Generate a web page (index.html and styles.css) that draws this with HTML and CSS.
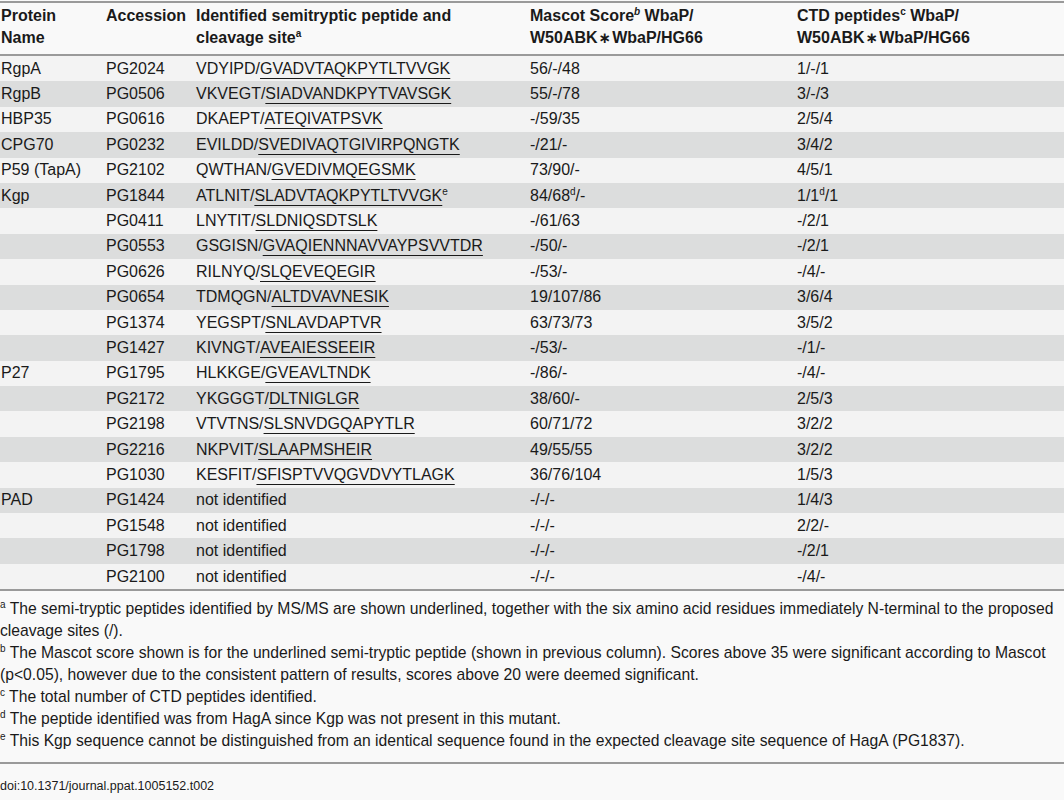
FILE: index.html
```html
<!DOCTYPE html>
<html lang="en">
<head>
  <meta charset="UTF-8">
  <title>Table 2</title>
  <link rel="stylesheet" href="styles.css">
</head>
<body>
  <div class="table-wrap">
    <table class="data-table">
      <colgroup>
        <col class="col-name">
        <col class="col-acc">
        <col class="col-pep">
        <col class="col-score">
        <col class="col-ctd">
      </colgroup>
      <thead>
        <tr>
          <th>Protein Name</th>
          <th>Accession</th>
          <th>Identified semitryptic peptide and cleavage site<sup>a</sup></th>
          <th>Mascot Score<sup><i>b</i></sup> WbaP/ W50ABK<span class="star">∗</span>WbaP/HG66</th>
          <th>CTD peptides<sup>c</sup> WbaP/ W50ABK<span class="star">∗</span>WbaP/HG66</th>
        </tr>
      </thead>
      <tbody>
        <tr><td>RgpA</td><td>PG2024</td><td>VDYIPD/<u>GVADVTAQKPYTLTVVGK</u></td><td>56/-/48</td><td>1/-/1</td></tr>
        <tr><td>RgpB</td><td>PG0506</td><td>VKVEGT/<u>SIADVANDKPYTVAVSGK</u></td><td>55/-/78</td><td>3/-/3</td></tr>
        <tr><td>HBP35</td><td>PG0616</td><td>DKAEPT/<u>ATEQIVATPSVK</u></td><td>-/59/35</td><td>2/5/4</td></tr>
        <tr><td>CPG70</td><td>PG0232</td><td>EVILDD/<u>SVEDIVAQTGIVIRPQNGTK</u></td><td>-/21/-</td><td>3/4/2</td></tr>
        <tr><td>P59 (TapA)</td><td>PG2102</td><td>QWTHAN/<u>GVEDIVMQEGSMK</u></td><td>73/90/-</td><td>4/5/1</td></tr>
        <tr><td>Kgp</td><td>PG1844</td><td>ATLNIT/<u>SLADVTAQKPYTLTVVGK</u><sup>e</sup></td><td>84/68<sup>d</sup>/-</td><td>1/1<sup>d</sup>/1</td></tr>
        <tr><td></td><td>PG0411</td><td>LNYTIT/<u>SLDNIQSDTSLK</u></td><td>-/61/63</td><td>-/2/1</td></tr>
        <tr><td></td><td>PG0553</td><td>GSGISN/<u>GVAQIENNNAVVAYPSVVTDR</u></td><td>-/50/-</td><td>-/2/1</td></tr>
        <tr><td></td><td>PG0626</td><td>RILNYQ/<u>SLQEVEQEGIR</u></td><td>-/53/-</td><td>-/4/-</td></tr>
        <tr><td></td><td>PG0654</td><td>TDMQGN/<u>ALTDVAVNESIK</u></td><td>19/107/86</td><td>3/6/4</td></tr>
        <tr><td></td><td>PG1374</td><td>YEGSPT/<u>SNLAVDAPTVR</u></td><td>63/73/73</td><td>3/5/2</td></tr>
        <tr><td></td><td>PG1427</td><td>KIVNGT/<u>AVEAIESSEEIR</u></td><td>-/53/-</td><td>-/1/-</td></tr>
        <tr><td>P27</td><td>PG1795</td><td>HLKKGE/<u>GVEAVLTNDK</u></td><td>-/86/-</td><td>-/4/-</td></tr>
        <tr><td></td><td>PG2172</td><td>YKGGGT/<u>DLTNIGLGR</u></td><td>38/60/-</td><td>2/5/3</td></tr>
        <tr><td></td><td>PG2198</td><td>VTVTNS/<u>SLSNVDGQAPYTLR</u></td><td>60/71/72</td><td>3/2/2</td></tr>
        <tr><td></td><td>PG2216</td><td>NKPVIT/<u>SLAAPMSHEIR</u></td><td>49/55/55</td><td>3/2/2</td></tr>
        <tr><td></td><td>PG1030</td><td>KESFIT/<u>SFISPTVVQGVDVYTLAGK</u></td><td>36/76/104</td><td>1/5/3</td></tr>
        <tr><td>PAD</td><td>PG1424</td><td>not identified</td><td>-/-/-</td><td>1/4/3</td></tr>
        <tr><td></td><td>PG1548</td><td>not identified</td><td>-/-/-</td><td>2/2/-</td></tr>
        <tr><td></td><td>PG1798</td><td>not identified</td><td>-/-/-</td><td>-/2/1</td></tr>
        <tr><td></td><td>PG2100</td><td>not identified</td><td>-/-/-</td><td>-/4/-</td></tr>
      </tbody>
    </table>
  </div>

  <div class="footnotes">
    <p><sup>a</sup> The semi-tryptic peptides identified by MS/MS are shown underlined, together with the six amino acid residues immediately N-terminal to the proposed cleavage sites (/).</p>
    <p><sup>b</sup> The Mascot score shown is for the underlined semi-tryptic peptide (shown in previous column). Scores above 35 were significant according to Mascot (p&lt;0.05), however due to the consistent pattern of results, scores above 20 were deemed significant.</p>
    <p><sup>c</sup> The total number of CTD peptides identified.</p>
    <p><sup>d</sup> The peptide identified was from HagA since Kgp was not present in this mutant.</p>
    <p><sup>e</sup> This Kgp sequence cannot be distinguished from an identical sequence found in the expected cleavage site sequence of HagA (PG1837).</p>
  </div>

  <div class="doi">doi:10.1371/journal.ppat.1005152.t002</div>
</body>
</html>
```

FILE: styles.css
```css
:root {
  --text: #1a1a1a;
  --page-bg: #f9f9f9;
  --row-light: #f3f3f3;
  --row-dark: #dcdddd;
  --rule: #9a9a9a;
}

body {
  margin: 0;
  padding: 0;
  font-family: 'Liberation Sans', Arial, Helvetica, sans-serif;
  font-size: 16px;
  color: var(--text);
  background-color: var(--page-bg);
}

.table-wrap {
  padding-top: 1px;
}

.data-table {
  width: 1064px;
  border-collapse: collapse;
  table-layout: fixed;
  border-top: 2px solid var(--rule);
  border-bottom: 2px solid var(--rule);
}

.col-name { width: 105px; }
.col-acc { width: 90px; }
.col-pep { width: 334px; }
.col-score { width: 267px; }
.col-ctd { width: 268px; }

.data-table th {
  text-align: left;
  vertical-align: top;
  font-weight: 700;
  line-height: 22px;
  padding: 2px 8px 5px 1px;
  border-bottom: 2px solid var(--rule);
  background-color: var(--page-bg);
}

.data-table td {
  height: 25.4px;
  padding: 0 8px 0 1px;
  line-height: 22px;
  white-space: nowrap;
  vertical-align: middle;
}

.data-table tbody tr:nth-child(odd) {
  background-color: var(--row-light);
}

.data-table tbody tr:nth-child(even) {
  background-color: var(--row-dark);
}

.data-table u {
  text-decoration-thickness: 1px;
  text-underline-offset: 4px;
}

sup {
  font-size: 10px;
  line-height: 1;
  vertical-align: 6px;
}

.star {
  font-family: 'DejaVu Sans', sans-serif;
  font-size: 15px;
  padding: 0 1px;
}

.footnotes {
  font-size: 15.7px;
  padding: 7px 0 10px 0;
  border-bottom: 2px solid var(--rule);
}

.footnotes p {
  margin: 0;
  line-height: 22px;
}

.doi {
  font-size: 12.5px;
  line-height: 22px;
  padding: 11px 0 0 0;
}
```
